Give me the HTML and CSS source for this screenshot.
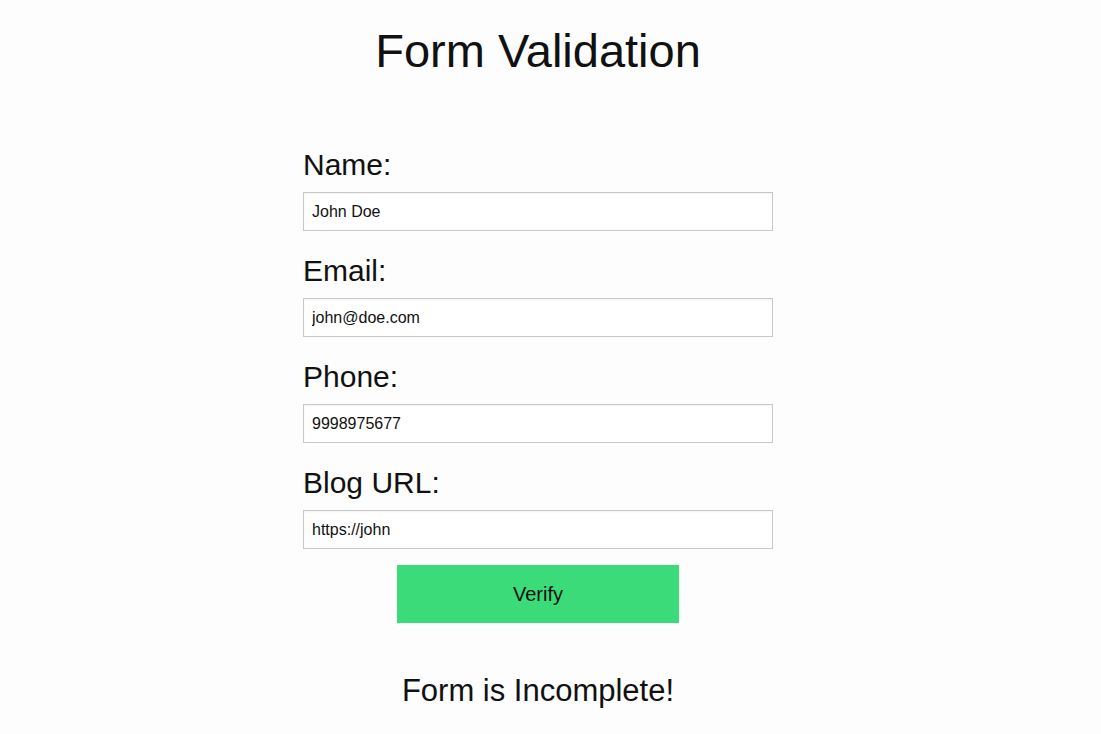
FILE: index.html
```html
<!DOCTYPE html>
<html lang="en">
<head>
<meta charset="utf-8">
<title>Form Validation</title>
<link rel="stylesheet" href="styles.css">
</head>
<body>
<main class="page">
  <h1 class="title">Form Validation</h1>
  <form class="form">
    <label class="label" for="name">Name:</label>
    <input class="field" id="name" type="text" value="John Doe">
    <label class="label" for="email">Email:</label>
    <input class="field" id="email" type="text" value="john@doe.com">
    <label class="label" for="phone">Phone:</label>
    <input class="field" id="phone" type="text" value="9998975677">
    <label class="label" for="blog">Blog URL:</label>
    <input class="field" id="blog" type="text" value="https://john">
    <button class="verify" type="button">Verify</button>
  </form>
  <p class="status">Form is Incomplete!</p>
</main>
</body>
</html>
```
FILE: styles.css
```css
html, body {
  margin: 0;
  padding: 0;
  background: #fdfdfd;
}

body {
  font-family: "Liberation Sans", Arial, sans-serif;
  color: #111;
}

.page {
  margin-right: 25px;
  display: flex;
  flex-direction: column;
  align-items: center;
}

.title {
  margin: 24px 0 0;
  font-size: 47px;
  line-height: 54px;
  font-weight: 400;
}

.form {
  width: 470px;
  margin-top: 70px;
  display: flex;
  flex-direction: column;
}

.label {
  display: block;
  font-size: 30px;
  line-height: 34px;
  margin-bottom: 10px;
}

.field {
  box-sizing: border-box;
  width: 470px;
  height: 39px;
  margin: 0 0 23px;
  padding: 0 8px;
  border: 1px solid #c8c8c8;
  background: #fff;
  box-shadow: inset 0 1px 2px rgba(0, 0, 0, 0.05);
  font-family: "Liberation Sans", Arial, sans-serif;
  font-size: 16px;
  color: #111;
  outline: none;
}

.field:last-of-type {
  margin-bottom: 16px;
}

.verify {
  align-self: center;
  width: 282px;
  height: 58px;
  border: none;
  background: #3bdb7a;
  font-family: "Liberation Sans", Arial, sans-serif;
  font-size: 20px;
  color: #111;
  padding: 0;
}

.status {
  margin: 50px 0 0;
  font-size: 31px;
  line-height: 36px;
}
```
